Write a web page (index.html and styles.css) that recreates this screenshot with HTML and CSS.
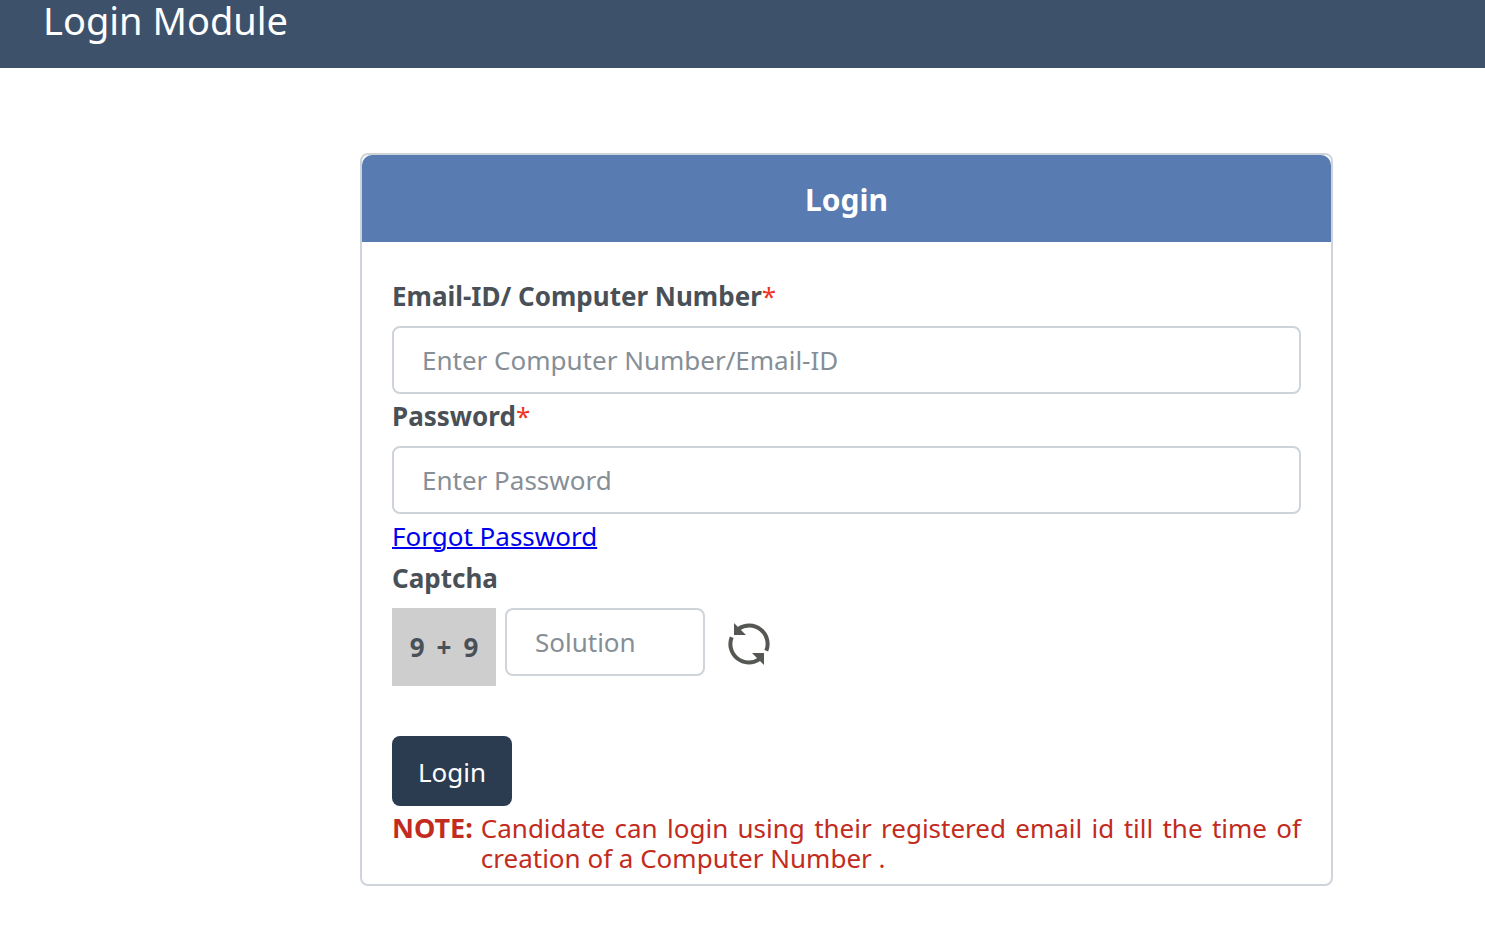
FILE: index.html
```html
<!DOCTYPE html>
<html lang="en">
<head>
<meta charset="utf-8">
<title>Login Module</title>
<link rel="stylesheet" href="styles.css">
</head>
<body>
<header class="topbar"><h1 class="topbar-title">Login Module</h1></header>
<main class="page">
  <section class="card">
    <h2 class="card-header">Login</h2>
    <form class="card-body">
      <label class="label" for="user">Email-ID/ Computer Number<span class="required">*</span></label>
      <input class="control" id="user" type="text" placeholder="Enter Computer Number/Email-ID">
      <label class="label" for="password">Password<span class="required">*</span></label>
      <input class="control" id="password" type="password" placeholder="Enter Password">
      <a class="forgot" href="#">Forgot Password</a>
      <label class="label" for="solution">Captcha</label>
      <div class="captcha">
        <div class="captcha-sum"><span>9</span> <span>+</span> <span>9</span></div>
        <input class="control solution" id="solution" type="text" placeholder="Solution">
        <button class="refresh" type="button" aria-label="Refresh captcha">
          <svg width="42" height="42" viewBox="0 0 42 42" fill="none" stroke="#555752" stroke-width="4">
            <path d="M10.500 5.800A18.500 18.500 0 0 1 38.300 27.800M31.500 36.200A18.500 18.500 0 0 1 3.700 14.200"/>
            <path fill="#555752" stroke="none" d="M6 0V12H18ZM36 42V30H24Z"/>
          </svg>
        </button>
      </div>
      <button class="submit" type="submit">Login</button>
      <div class="note"><strong class="note-title">NOTE:</strong><p class="note-text">Candidate can login using their registered email id till the time of creation of a Computer Number .</p></div>
    </form>
  </section>
</main>
</body>
</html>
```
FILE: styles.css
```css
* { box-sizing: border-box; }
body {
  margin: 0;
  background: #fff;
  color: #495057;
  font: 26px/30px "Noto Sans", "Open Sans", sans-serif;
}
.topbar { padding: 0 43px 28px; background: #3e516b; }
.topbar-title { margin: 0; color: #fff; font-size: 38px; font-weight: 400; line-height: 40px; }
.page { padding: 85px 152px 40px 360px; }
.card { border: 2px solid #ced4da; border-radius: 8px; }
.card-header {
  margin: 0;
  padding: 25px 30px 22px;
  border-radius: 10px 10px 0 0;
  background: #587bb2;
  color: #fff;
  font-size: 30px;
  line-height: 40px;
  text-align: center;
}
.card-body { display: flex; flex-direction: column; align-items: flex-start; padding: 39px 30px 11px; }
.label { margin-bottom: 15px; font-weight: 700; }
.required { color: #f0321e; font-weight: 400; }
.control {
  width: 100%;
  height: 68px;
  margin-bottom: 7px;
  padding: 0 28px;
  border: 2px solid #ced4da;
  border-radius: 8px;
  background: #fff;
  color: #495057;
  font: inherit;
}
.control::placeholder { color: #868e96; opacity: 1; }
.forgot { margin-bottom: 12px; color: #00e; text-decoration-thickness: 2px; }
.captcha { display: flex; align-items: flex-start; margin-bottom: 50px; }
.captcha-sum {
  display: flex;
  justify-content: center;
  gap: 12px;
  width: 104px;
  margin-right: 9px;
  padding: 24px 0;
  background: #cecece;
  font-weight: 700;
}
.solution { width: 200px; margin: 0 23px 0 0; }
.refresh { display: flex; margin-top: 15px; padding: 0; border: 0; background: none; }
.submit {
  min-width: 120px;
  height: 70px;
  margin-bottom: 7px;
  padding: 2px 24px 0;
  border: 0;
  border-radius: 8px;
  background: #2b3c50;
  color: #fff;
  font: inherit;
}
.note { display: flex; gap: 8px; color: #c22b20; }
.note-title { font-size: 27px; }
.note-text { margin: 0; text-align: justify; }
```
